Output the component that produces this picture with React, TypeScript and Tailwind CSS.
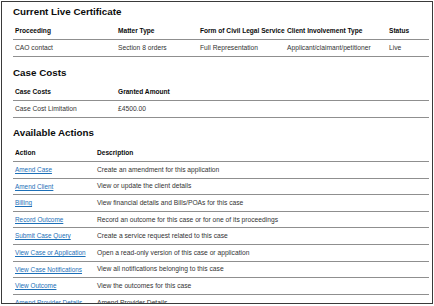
const font = { fontFamily: '"Liberation Sans", Arial, sans-serif' };

const certHeaders = [
  "Proceeding",
  "Matter Type",
  "Form of Civil Legal Service",
  "Client Involvement Type",
  "Status",
];
const certRow = [
  "CAO contact",
  "Section 8 orders",
  "Full Representation",
  "Applicant/claimant/petitioner",
  "Live",
];

const actions: [string, string][] = [
  ["Amend Case", "Create an amendment for this application"],
  ["Amend Client", "View or update the client details"],
  ["Billing", "View financial details and Bills/POAs for this case"],
  ["Record Outcome", "Record an outcome for this case or for one of its proceedings"],
  ["Submit Case Query", "Create a service request related to this case"],
  ["View Case or Application", "Open a read-only version of this case or application"],
  ["View Case Notifications", "View all notifications belonging to this case"],
  ["View Outcome", "View the outcomes for this case"],
  ["Amend Provider Details", "Amend Provider Details"],
];

function Heading({ children, className }: { children: string; className: string }) {
  return (
    <h2 className={`text-[9.8px] leading-[14px] font-bold text-[#0b0c0c] ${className}`}>
      {children}
    </h2>
  );
}

export default function App() {
  return (
    <div className="w-[434px] h-[306px] bg-white pt-[1px] pl-[1px]" style={font}>
      <div className="w-[432px] h-[303px] border border-[#3a3a3a] overflow-hidden pl-[11px] pr-[3px] pt-[3px]">
        <Heading className="">Current Live Certificate</Heading>

        {/* certificate table */}
        <div className="mt-[4px]">
          <div className="grid grid-cols-[103px_82px_87px_102px_1fr] items-center h-[17px] border-b border-[#8f8f8f] text-[6.6px] font-bold text-[#0b0c0c]">
            {certHeaders.map((h) => (
              <div key={h} className="pl-[2px] whitespace-nowrap">{h}</div>
            ))}
          </div>
          <div className="grid grid-cols-[103px_82px_87px_102px_1fr] items-center h-[17px] border-b border-[#8f8f8f] text-[6.7px] text-[#333]">
            {certRow.map((c) => (
              <div key={c} className="pl-[2px] whitespace-nowrap">{c}</div>
            ))}
          </div>
        </div>

        <Heading className="mt-[9px]">Case Costs</Heading>
        <div className="mt-[4px]">
          <div className="grid grid-cols-[103px_1fr] items-center h-[17px] border-b border-[#8f8f8f] text-[6.6px] font-bold text-[#0b0c0c]">
            <div className="pl-[2px]">Case Costs</div>
            <div className="pl-[2px]">Granted Amount</div>
          </div>
          <div className="grid grid-cols-[103px_1fr] items-center h-[17px] border-b border-[#8f8f8f] text-[6.7px] text-[#333]">
            <div className="pl-[2px]">Case Cost Limitation</div>
            <div className="pl-[2px]">£4500.00</div>
          </div>
        </div>

        <Heading className="mt-[8px]">Available Actions</Heading>
        <div className="mt-[5px]">
          <div className="grid grid-cols-[82px_1fr] items-center h-[17px] border-b border-[#8f8f8f] text-[6.6px] font-bold text-[#0b0c0c]">
            <div className="pl-[2px]">Action</div>
            <div className="pl-[2px]">Description</div>
          </div>
          {actions.map(([a, d]) => (
            <div
              key={a}
              className="grid grid-cols-[82px_1fr] items-center h-[16.6px] border-b border-[#8f8f8f] text-[6.7px] text-[#333]"
            >
              <div className="pl-[2px] whitespace-nowrap text-[6.4px]">
                <a href="#" className="text-[#1d70b8] underline">{a}</a>
              </div>
              <div className="pl-[2px] whitespace-nowrap">{d}</div>
            </div>
          ))}
        </div>
      </div>
    </div>
  );
}
